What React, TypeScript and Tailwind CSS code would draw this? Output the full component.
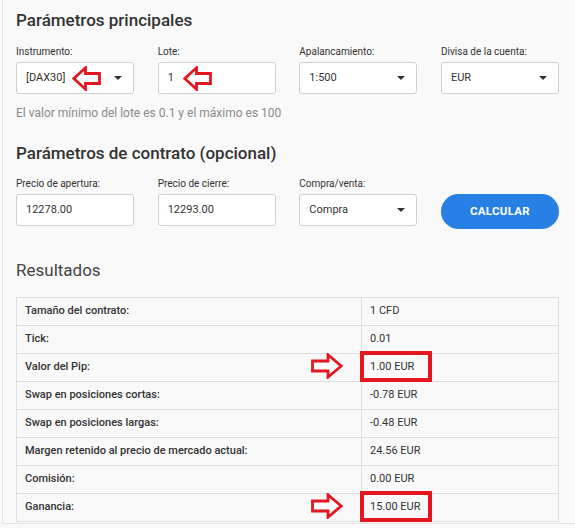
import type { ReactNode } from "react";

const font = { fontFamily: "Roboto, 'Liberation Sans', sans-serif" };

function ArrowLeft() {
  return (
    <svg width="29" height="25" viewBox="0 0 29 25" className="block">
      <polygon
        points="1.8,12.5 13.5,1.8 13.5,7.5 27.5,7.5 27.5,17.5 13.5,17.5 13.5,23.2"
        fill="none"
        stroke="#e4161f"
        strokeWidth="2.8"
        strokeLinejoin="miter"
      />
    </svg>
  );
}

function ArrowRight() {
  return (
    <svg width="32" height="26" viewBox="0 0 32 26" className="block">
      <polygon
        points="30.2,13 17,1.8 17,8 1.5,8 1.5,18 17,18 17,24.2"
        fill="none"
        stroke="#e4161f"
        strokeWidth="2.8"
        strokeLinejoin="miter"
      />
    </svg>
  );
}

function Caret() {
  return <span className="w-0 h-0 border-l-[4px] border-r-[4px] border-t-[4px] border-l-transparent border-r-transparent border-t-[#333]" />;
}

function Field({ label, children }: { label: string; children: ReactNode }) {
  return (
    <div className="flex flex-col w-[118px]">
      <label className="text-[10px] leading-[14px] text-[#333] mb-[3px]">{label}</label>
      {children}
    </div>
  );
}

function Box({ value, select, arrow }: { value: string; select?: boolean; arrow?: ReactNode }) {
  return (
    <div className="relative h-[32px] bg-white border border-[#cfcfcf] rounded-[3px] flex items-center justify-between pl-[9px] pr-[11px] text-[11px] text-[#333]">
      <span>{value}</span>
      {select && <Caret />}
      {arrow}
    </div>
  );
}

const rows: [string, string, boolean?][] = [
  ["Tamaño del contrato:", "1 CFD"],
  ["Tick:", "0.01"],
  ["Valor del Pip:", "1.00 EUR", true],
  ["Swap en posiciones cortas:", "-0.78 EUR"],
  ["Swap en posiciones largas:", "-0.48 EUR"],
  ["Margen retenido al precio de mercado actual:", "24.56 EUR"],
  ["Comisión:", "0.00 EUR"],
  ["Ganancia:", "15.00 EUR", true],
];

export default function App() {
  return (
    <div className="w-[575px] h-[528px] bg-[#f9f9f9] overflow-hidden" style={font}>
      <div className="ml-[2px] h-[524px] border-l border-b border-[#e2e2e2] pl-[13px] pt-[8px]">
        <div className="w-[543px]">
          <h2 className="text-[17px] leading-[24px] font-medium text-[#333]">Parámetros principales</h2>

          <div className="flex justify-between mt-[13px]">
            <Field label="Instrumento:">
              <Box
                value="[DAX30]"
                select
                arrow={
                  <div className="absolute left-[55px] top-[3px]">
                    <ArrowLeft />
                  </div>
                }
              />
            </Field>
            <Field label="Lote:">
              <Box
                value="1"
                arrow={
                  <div className="absolute left-[24px] top-[3px]">
                    <ArrowLeft />
                  </div>
                }
              />
            </Field>
            <Field label="Apalancamiento:">
              <Box value="1:500" select />
            </Field>
            <Field label="Divisa de la cuenta:">
              <Box value="EUR" select />
            </Field>
          </div>

          <p className="text-[12px] leading-[16px] text-[#8a8a8a] mt-[11px]">
            El valor mínimo del lote es 0.1 y el máximo es 100
          </p>

          <h2 className="text-[17px] leading-[24px] font-medium text-[#333] mt-[20px]">
            Parámetros de contrato (opcional)
          </h2>

          <div className="flex justify-between items-end mt-[12px]">
            <Field label="Precio de apertura:">
              <Box value="12278.00" />
            </Field>
            <Field label="Precio de cierre:">
              <Box value="12293.00" />
            </Field>
            <Field label="Compra/venta:">
              <Box value="Compra" select />
            </Field>
            <button className="w-[118px] h-[35px] rounded-full bg-[#2780e3] text-white text-[11.5px] font-bold tracking-[0.3px] -mb-[3px]">
              CALCULAR
            </button>
          </div>

          <h2 className="text-[17px] leading-[24px] text-[#444] mt-[32px]">Resultados</h2>

          <div className="mt-[15px] border border-[#dedede] border-b-0">
            {rows.map(([label, value, mark]) => (
              <div key={label} className="flex h-[28px] border-b border-[#dedede] text-[11px] text-[#333]">
                <div className="relative w-[345px] flex items-center pl-[8px] font-medium border-r border-[#dedede]">
                  {label}
                  {mark && (
                    <div className="absolute right-[18px] top-[-1px]">
                      <ArrowRight />
                    </div>
                  )}
                </div>
                <div className="relative flex-1 flex items-center pl-[8px]">
                  {value}
                  {mark && (
                    <div className="absolute left-[-2px] top-[-3px] w-[72px] h-[31px] border-[4px] border-[#e4161f]" />
                  )}
                </div>
              </div>
            ))}
          </div>
        </div>
      </div>
    </div>
  );
}
